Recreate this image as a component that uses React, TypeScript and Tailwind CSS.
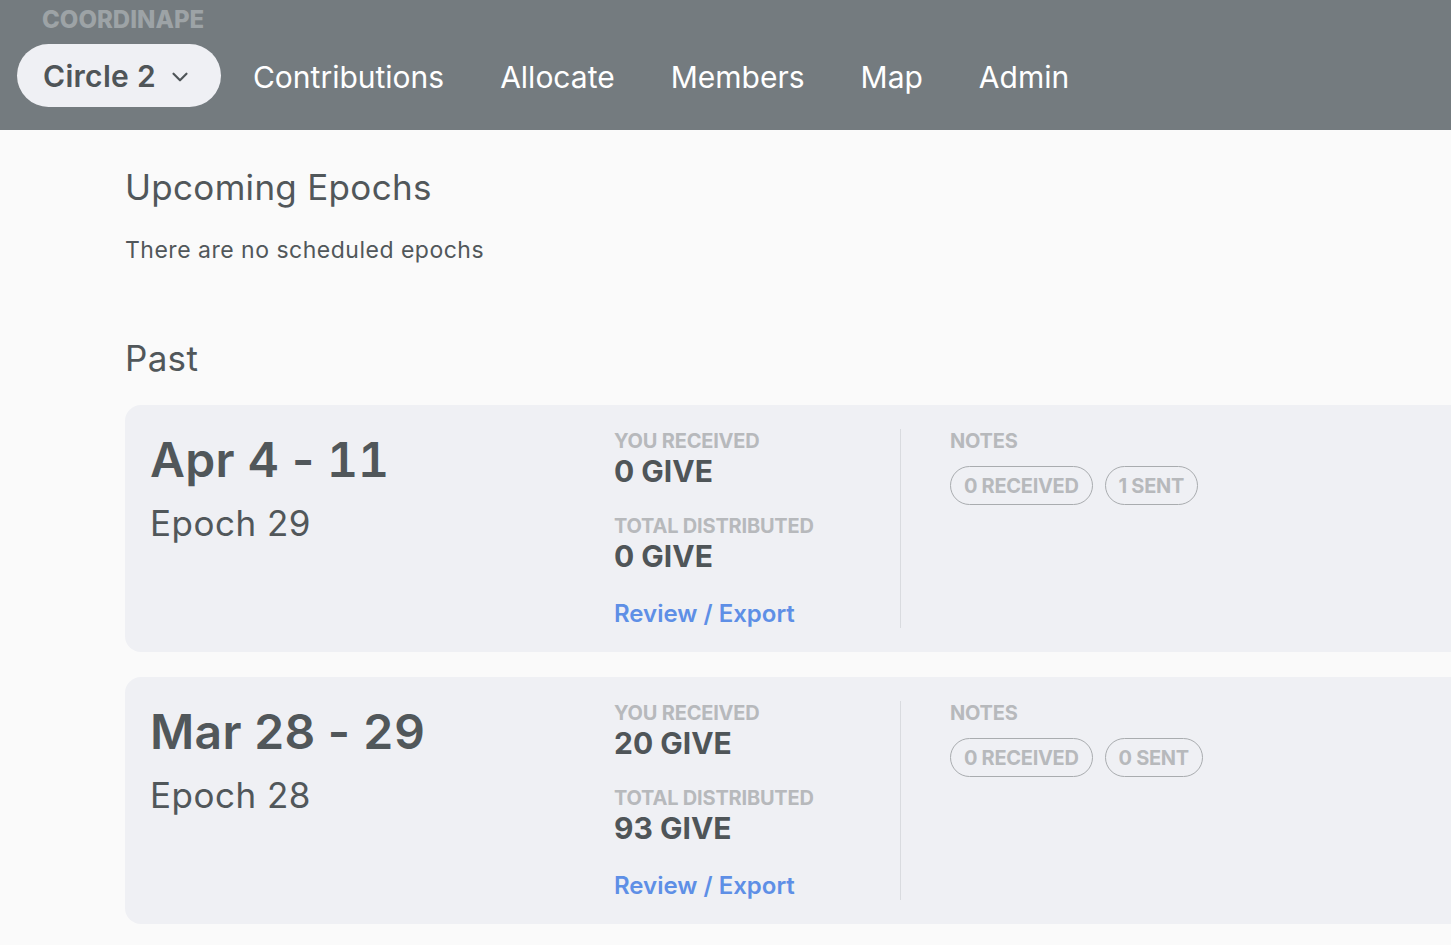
import { ChevronDown } from "lucide-react";

const NAV = ["Contributions", "Allocate", "Members", "Map", "Admin"];

type Epoch = {
  start: string;
  end: string;
  num: number;
  received: number;
  total: number;
  notesIn: number;
  notesOut: number;
};

const PAST: Epoch[] = [
  { start: "Apr 4", end: "11", num: 29, received: 0, total: 0, notesIn: 0, notesOut: 1 },
  { start: "Mar 28", end: "29", num: 28, received: 20, total: 93, notesIn: 0, notesOut: 0 },
];

export default function App() {
  return (
    <div className="min-h-[945px] bg-[#fafafa] font-['Inter',sans-serif] text-[#51575a]">
      <header className="h-[130px] bg-[#747b7f] px-[17px]">
        <div className="h-[44px] pl-[25px] pt-[8px] text-[24px] font-extrabold leading-none text-[#9da3a6]">
          COORDINAPE
        </div>
        <nav className="flex items-center">
          <button className="flex h-[63px] items-center gap-[11px] rounded-full bg-[#eff0f4] pl-[26px] pr-[28px] pt-[2px] text-[30px] font-semibold tracking-[0.3px] text-[#4f5558]">
            Circle 2
            <ChevronDown size={26} strokeWidth={2} className="mt-[1px]" />
          </button>
          <div className="ml-[32px] flex gap-[56px] pt-[3px] text-[30px] text-white">
            {NAV.map((n) => (
              <a key={n}>{n}</a>
            ))}
          </div>
        </nav>
      </header>

      <main className="pl-[125px]">
        <h2 className="mt-[36px] text-[35px] leading-[42px] font-normal tracking-[0.3px]">Upcoming Epochs</h2>
        <p className="mt-[28px] text-[23px] leading-[28px] tracking-[0.5px]">There are no scheduled epochs</p>
        <h2 className="mt-[73px] text-[35px] leading-[42px] font-normal tracking-[0.3px]">Past</h2>

        <div className="mt-[26px] flex flex-col gap-[25px]">
          {PAST.map((e) => (
            <EpochCard key={e.num} e={e} />
          ))}
        </div>
      </main>
    </div>
  );
}

function EpochCard({ e }: { e: Epoch }) {
  return (
    <div className="flex h-[247px] rounded-l-[16px] bg-[#eff0f4] py-[24px] pl-[25px]">
      <div className="w-[464px]">
        <div className="mt-[1px] text-[48px] leading-[60px] font-semibold tracking-[0.3px]">
          {e.start} - <span className="tabular-nums tracking-normal">{e.end}</span>
        </div>
        <div className="mt-[12px] text-[35px] leading-[42px] tracking-[0.5px]">Epoch {e.num}</div>
      </div>

      <div className="w-[287px] border-r border-[#d9dbdf]">
        <Label>YOU RECEIVED</Label>
        <Value>{e.received} GIVE</Value>
        <div className="mt-[25px]">
          <Label>TOTAL DISTRIBUTED</Label>
        </div>
        <Value>{e.total} GIVE</Value>
        <a className="mt-[25px] block text-[24px] leading-[30px] font-semibold text-[#5e8fe6]">Review / Export</a>
      </div>

      <div className="pl-[49px]">
        <Label>NOTES</Label>
        <div className="mt-[13px] flex gap-[12px]">
          <Pill>{e.notesIn} RECEIVED</Pill>
          <Pill>{e.notesOut} SENT</Pill>
        </div>
      </div>
    </div>
  );
}

function Label({ children }: { children: React.ReactNode }) {
  return (
    <div className="text-[20px] leading-[24px] font-bold tracking-[-0.2px] text-[#b7b9bc]">{children}</div>
  );
}

function Value({ children }: { children: React.ReactNode }) {
  return <div className="text-[30px] leading-[36px] font-bold text-[#4f5558]">{children}</div>;
}

function Pill({ children }: { children: React.ReactNode }) {
  return (
    <span className="flex h-[39px] items-center rounded-full border border-[#a9acaf] px-[13px] text-[20px] font-bold tracking-[-0.3px] text-[#b7b9bc]">
      {children}
    </span>
  );
}
